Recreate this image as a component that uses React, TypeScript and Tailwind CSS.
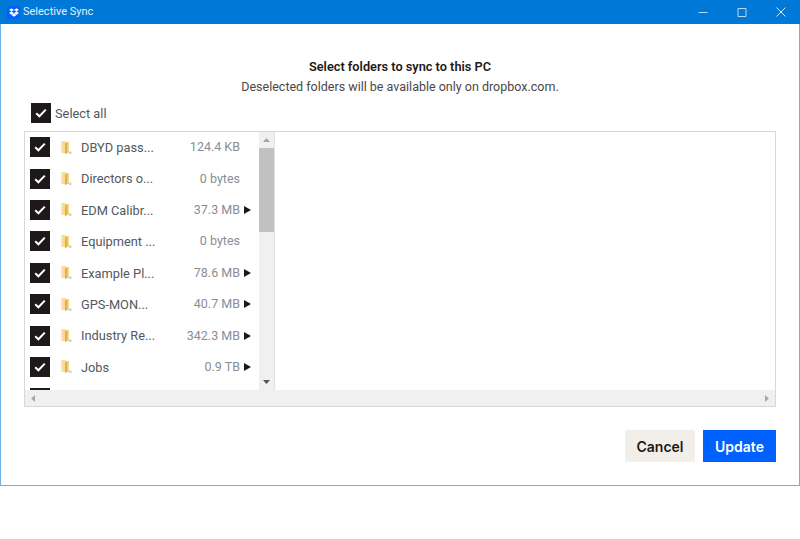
import React from "react";

const rows = [
  { name: "DBYD pass...", size: "124.4 KB", arrow: false },
  { name: "Directors o...", size: "0 bytes", arrow: false },
  { name: "EDM Calibr...", size: "37.3 MB", arrow: true },
  { name: "Equipment ...", size: "0 bytes", arrow: false },
  { name: "Example Pl...", size: "78.6 MB", arrow: true },
  { name: "GPS-MON...", size: "40.7 MB", arrow: true },
  { name: "Industry Re...", size: "342.3 MB", arrow: true },
  { name: "Jobs", size: "0.9 TB", arrow: true },
  { name: "", size: "", arrow: false },
];

function Check() {
  return (
    <span className="flex h-5 w-5 shrink-0 items-center justify-center bg-[#1e1919]">
      <svg width="12" height="10" viewBox="0 0 12 10" fill="none">
        <path d="M1.2 5.200 4.400 8.300 10.800 1.600" stroke="#fff" strokeWidth="2" />
      </svg>
    </span>
  );
}

function Folder() {
  return (
    <svg width="11" height="13" viewBox="0 0 11 13" className="shrink-0">
      <path d="M0 0h4l1 1h3v11H0z" fill="#f8dc8c" />
      <path d="M0 0h1.500v12H0z" fill="#fbeab9" />
      <path d="M4 2.500 6.500 1v11L4 13z" fill="#d9b25c" />
      <path d="M6.500 1H8v11H6.500z" fill="#f5d67f" />
      <path d="M8 10.500h2.500V13H8z" fill="#cfd1d4" />
    </svg>
  );
}

function Row({ name, size, arrow }: { name: string; size: string; arrow: boolean }) {
  return (
    <div className="flex h-[31.4px] shrink-0 items-center pl-[5px]">
      <Check />
      <span className="ml-[10px] flex w-[12px] justify-center">{name && <Folder />}</span>
      <span className="ml-[9px] w-[84px] whitespace-nowrap pt-px text-[12.8px] text-[#52585f]">{name}</span>
      <span className="w-[75px] whitespace-nowrap pt-px text-right text-[12.5px] text-[#8a8e93]">{size}</span>
      {arrow && (
        <svg width="7" height="8" viewBox="0 0 7 8" className="ml-[4px] shrink-0">
          <path d="M0 0 7 4 0 8z" fill="#1e1919" />
        </svg>
      )}
    </div>
  );
}

export default function App() {
  return (
    <div className="h-[539px] w-[800px] bg-white font-['Roboto',sans-serif]">
      <div className="flex h-[486px] flex-col border-x border-b border-[#6db3ea]">
        <div className="-mx-px flex h-[24px] shrink-0 items-center bg-[#0078d7] pl-[7px] text-white">
          <span className="flex h-[13px] w-[13px] items-center justify-center bg-[#0061fe]">
            <svg width="10" height="9" viewBox="0 0 10 9" fill="#fff">
              <path d="M2.500.300 5 1.900 2.500 3.500 0 1.900zM7.500.300 10 1.900 7.500 3.500 5 1.900zM0 5.100 2.500 3.500 5 5.100 2.500 6.700zM10 5.100 7.500 3.500 5 5.100 7.500 6.700zM2.500 7.100 5 5.500l2.500 1.600L5 8.700z" />
            </svg>
          </span>
          <span className="ml-[3px] text-[11px] text-[#e3f0fb]">Selective Sync</span>
          <div className="ml-auto flex h-full items-center">
            <span className="flex h-full w-[39px] items-center justify-center">
              <svg width="10" height="10" viewBox="0 0 10 10"><path d="M.5 5.500h9" stroke="#b8daf4" /></svg>
            </span>
            <span className="flex h-full w-[39px] items-center justify-center">
              <svg width="10" height="10" viewBox="0 0 10 10"><path d="M1 1.500h8v8H1z" fill="none" stroke="#b8daf4" /></svg>
            </span>
            <span className="flex h-full w-[39px] items-center justify-center">
              <svg width="10" height="10" viewBox="0 0 10 10"><path d="M.5.500l9 9M9.500.500l-9 9" stroke="#d5e9f9" /></svg>
            </span>
          </div>
        </div>

        <div className="flex min-h-0 flex-1 flex-col px-[23px]">
          <div className="mt-[35px] text-center text-[12.75px] font-semibold leading-[16px] text-[#1e1919]">
            Select folders to sync to this PC
          </div>
          <div className="mt-[4px] text-center text-[12.5px] leading-[16px] text-[#4b4848]">
            Deselected folders will be available only on dropbox.com.
          </div>
          <div className="mt-[8px] flex items-center pl-[7px]">
            <Check />
            <span className="ml-[4px] pt-px text-[12.8px] text-[#52585f]">Select all</span>
          </div>

          <div className="mt-[8px] flex h-[276px] flex-col border border-[#d9d9d3]">
            <div className="flex min-h-0 flex-1">
              <div className="flex w-[234px] flex-col overflow-hidden">
                <div className="-mt-[0.7px] flex flex-col">
                  {rows.map((r, i) => (
                    <Row key={i} {...r} />
                  ))}
                </div>
              </div>
              <div className="flex w-[16px] flex-col items-center border-r border-[#e3e3df] bg-[#f0f0f0]">
                <svg width="7" height="4" viewBox="0 0 7 4" className="mt-[6px]"><path d="M3.500 0 7 4H0z" fill="#a6a6a6" /></svg>
                <div className="mt-[6px] h-[84px] w-[15px] bg-[#c1c1c1]" />
                <svg width="7" height="4" viewBox="0 0 7 4" className="mt-auto mb-[6px]"><path d="M0 0h7L3.500 4z" fill="#555" /></svg>
              </div>
              <div className="flex-1" />
            </div>
            <div className="flex h-[16px] shrink-0 items-center justify-between bg-[#f0f0f0] px-[6px]">
              <svg width="4" height="7" viewBox="0 0 4 7"><path d="M4 0v7L0 3.500z" fill="#a6a6a6" /></svg>
              <svg width="4" height="7" viewBox="0 0 4 7"><path d="M0 0v7l4-3.500z" fill="#a6a6a6" /></svg>
            </div>
          </div>

          <div className="mt-[23px] flex justify-end gap-[8px] font-['Inter',sans-serif]">
            <button className="flex h-[32px] w-[70px] items-center justify-center bg-[#f2efeb] text-[14px] font-semibold text-[#1e1919]">
              Cancel
            </button>
            <button className="flex h-[32px] w-[73px] items-center justify-center bg-[#0061fe] text-[14px] font-semibold text-white">
              Update
            </button>
          </div>
        </div>
      </div>
    </div>
  );
}
